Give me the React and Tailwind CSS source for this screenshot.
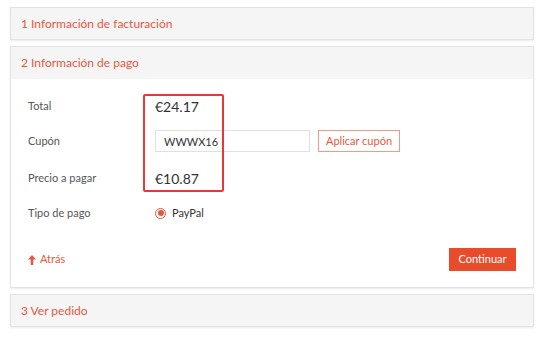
const FONT = { fontFamily: 'Lato, "Noto Sans", Arial, sans-serif' };

function Row({ label, children, className = '' }) {
  return (
    <div className={`flex items-center ${className}`}>
      <div className="w-[127px] shrink-0 text-[11px] text-[#555]">{label}</div>
      <div className="flex items-center">{children}</div>
    </div>
  );
}

function Collapsed({ title }) {
  return (
    <div className="flex h-[33px] items-center border border-[#e2e2e2] bg-[#f5f5f5] pl-[10px] text-[12px] text-[#e8573d] shadow-[0_1px_2px_rgba(0,0,0,0.08)]">
      {title}
    </div>
  );
}

export default function App() {
  return (
    <div className="min-h-[337px] bg-white pb-[9px] pl-[10px] pr-[8px] pt-[7px]" style={FONT}>
      <div className="flex flex-col gap-[6px]">
        <Collapsed title="1 Información de facturación" />

        <div className="border border-[#e2e2e2] bg-white shadow-[0_1px_2px_rgba(0,0,0,0.08)]">
          <div className="flex h-[32px] items-center bg-[#f5f5f5] pl-[10px] text-[12px] text-[#e8573d]">
            2 Información de pago
          </div>
          <div className="relative pb-[16px] pl-[17px] pr-[17px] pt-[16px]">
            <Row label="Total" className="h-[22px]">
              <span className="text-[14px] text-[#333]">€24.17</span>
            </Row>
            <Row label="Cupón" className="mt-[13px] h-[22px]">
              <input
                readOnly
                value="WWWX16"
                className="h-[22px] w-[155px] border border-[#e0e0e0] px-[8px] text-[11px] text-[#333] outline-none"
              />
              <button
                type="button"
                className="ml-[8px] h-[22px] w-[82px] border border-[#f39a80] text-[11px] text-[#e8573d]"
              >
                Aplicar cupón
              </button>
            </Row>
            <Row label="Precio a pagar" className="mt-[15px] h-[22px]">
              <span className="text-[14px] text-[#333]">€10.87</span>
            </Row>
            <Row label="Tipo de pago" className="mt-[13px] h-[22px]">
              <span className="flex h-[11px] w-[11px] items-center justify-center rounded-full border border-[#e8573d]">
                <span className="h-[6px] w-[6px] rounded-full bg-[#e8573d]" />
              </span>
              <span className="ml-[6px] text-[11px] text-[#333]">PayPal</span>
            </Row>

            <div className="mt-[24px] flex h-[23px] items-center justify-between">
              <div className="flex items-center gap-[4px] text-[11px] text-[#e8573d]">
                <svg width="8" height="10" viewBox="0 0 8 10">
                  <path d="M4 0 L8 4.5 L5.3 4.5 L5.3 10 L2.7 10 L2.7 4.5 L0 4.5 Z" fill="#e8573d" />
                </svg>
                Atrás
              </div>
              <button
                type="button"
                className="h-[23px] w-[67px] bg-[#e84c2b] text-[11px] text-white"
              >
                Continuar
              </button>
            </div>

            <div className="pointer-events-none absolute left-[132px] top-[15px] h-[98px] w-[81px] rounded-[2px] border-2 border-[#e53935]" />
          </div>
        </div>

        <Collapsed title="3 Ver pedido" />
      </div>
    </div>
  );
}
